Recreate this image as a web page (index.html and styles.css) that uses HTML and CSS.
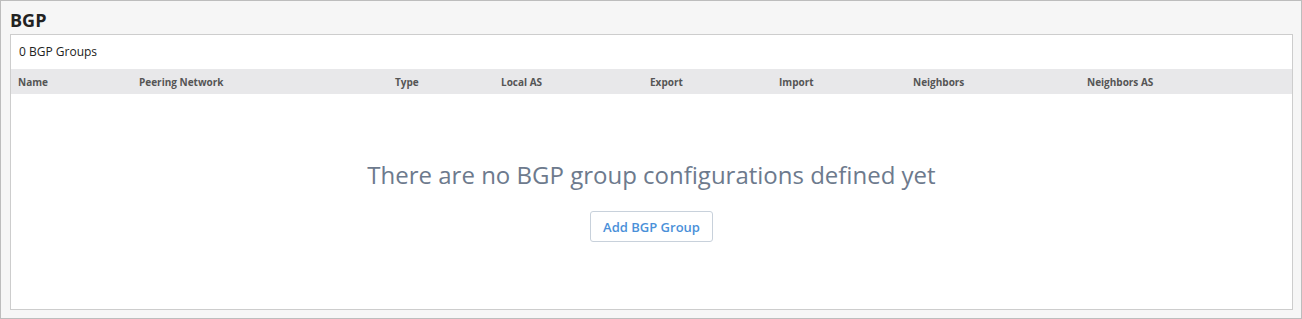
FILE: index.html
```html
<!DOCTYPE html>
<html>
<head>
<meta charset="utf-8">
<link rel="stylesheet" href="styles.css">
</head>
<body>
<div class="frame">
  <h1 class="title">BGP</h1>
  <div class="panel">
    <div class="count">0 BGP Groups</div>
    <div class="thead">
      <div>Name</div>
      <div>Peering Network</div>
      <div>Type</div>
      <div>Local AS</div>
      <div>Export</div>
      <div>Import</div>
      <div>Neighbors</div>
      <div>Neighbors AS</div>
    </div>
    <div class="empty">
      <div class="empty-msg">There are no BGP group configurations defined yet</div>
      <button class="btn">Add BGP Group</button>
    </div>
  </div>
</div>
</body>
</html>
```
FILE: styles.css
```css
html, body {
  margin: 0;
  padding: 0;
}
body {
  font-family: "Open Sans", "Liberation Sans", sans-serif;
  background: #fff;
}
.frame {
  box-sizing: border-box;
  width: 1302px;
  height: 319px;
  border: 1px solid #bdbdbd;
  background: #f6f6f6;
  padding: 0 8px 8px 9px;
  display: flex;
  flex-direction: column;
}
.title {
  margin: 0;
  font-size: 18px;
  font-weight: 700;
  color: #222;
  line-height: 22px;
  height: 33px;
  padding-top: 8px;
  box-sizing: border-box;
}
.panel {
  flex: 1;
  background: #fff;
  border: 1px solid #cdcdcd;
  display: flex;
  flex-direction: column;
}
.count {
  font-size: 12px;
  color: #222;
  height: 34px;
  line-height: 34px;
  padding-left: 8px;
}
.thead {
  display: grid;
  grid-template-columns: 121px 256px 106px 149px 129px 134px 174px 1fr;
  background: #e8e8ea;
  height: 25px;
  align-items: center;
  padding-left: 7px;
  font-size: 10px;
  font-weight: 700;
  color: #555;
}
.empty {
  flex: 1;
  display: flex;
  flex-direction: column;
  align-items: center;
  padding-top: 65px;
}
.empty-msg {
  font-size: 24px;
  color: #6d7a8d;
  line-height: 32px;
}
.btn {
  margin-top: 20px;
  font-family: "Open Sans", "Liberation Sans", sans-serif;
  font-size: 13px;
  font-weight: 600;
  color: #4a90d9;
  background: #fff;
  border: 1px solid #c8d1db;
  border-radius: 3px;
  width: 123px;
  height: 31px;
  padding: 0;
}
```
